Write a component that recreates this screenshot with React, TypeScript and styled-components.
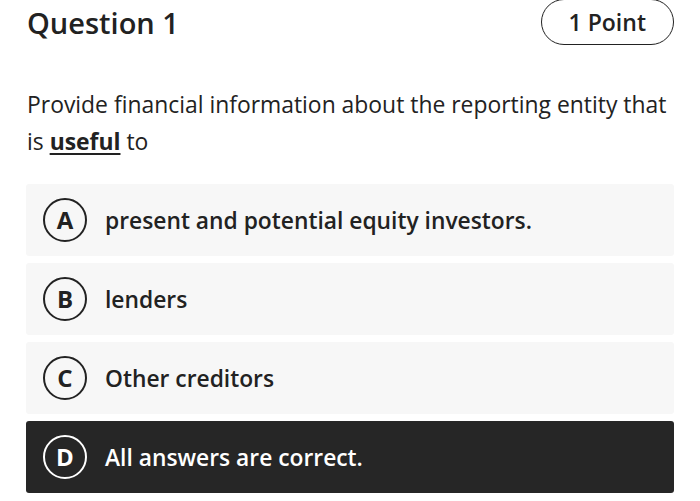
import React from "react";
import styled, { createGlobalStyle } from "styled-components";

const GlobalStyle = createGlobalStyle`
  html, body {
    margin: 0;
    padding: 0;
    background: #ffffff;
  }
  body {
    font-family: "Open Sans", "Noto Sans", sans-serif;
    color: #222222;
  }
`;

// #region Layout
const Page = styled.div`
  width: 700px;
  height: 501px;
  box-sizing: border-box;
  padding: 0 26px 0 26px;
  display: flex;
  flex-direction: column;
  overflow: hidden;
`;
const Header = styled.div`
  display: flex;
  align-items: center;
  justify-content: space-between;
  height: 45px;
`;
const Title = styled.h1`
  margin: 0 0 0 1px;
  font-size: 29px;
  font-weight: 600;
  color: #222222;
`;
const PointPill = styled.div`
  height: 46px;
  box-sizing: border-box;
  padding: 0 27px;
  display: flex;
  align-items: center;
  border: 1.5px solid #222222;
  border-radius: 23px;
  font-size: 23px;
  font-weight: 600;
  color: #222222;
  margin-top: -2px;
`;
const QuestionText = styled.p`
  margin: 41px 0 0 1px;
  font-size: 22.9px;
  line-height: 37px;
  font-weight: 400;
  color: #222222;

  strong {
    font-weight: 700;
    text-decoration: underline;
    text-underline-offset: 3px;
    text-decoration-thickness: 2px;
  }
`;
const OptionList = styled.div`
  margin-top: 24px;
  display: flex;
  flex-direction: column;
  gap: 7px;
`;
// #endregion

// #region Option
const OptionRow = styled.div<{ $selected?: boolean }>`
  height: 72px;
  box-sizing: border-box;
  display: flex;
  align-items: center;
  gap: 18px;
  padding-left: 17px;
  border-radius: 3px;
  background: ${(p) => (p.$selected ? "#262626" : "#f7f7f7")};
  color: ${(p) => (p.$selected ? "#ffffff" : "#222222")};
`;
const LetterCircle = styled.div<{ $selected?: boolean }>`
  width: 44px;
  height: 44px;
  box-sizing: border-box;
  border-radius: 50%;
  border: 2.5px solid ${(p) => (p.$selected ? "#ffffff" : "#222222")};
  display: flex;
  align-items: center;
  justify-content: center;
  font-size: 24px;
  font-weight: 700;
  line-height: 1;
  flex-shrink: 0;
`;
const OptionLabel = styled.span`
  font-size: 22.8px;
  font-weight: 600;
`;
// #endregion

const options = [
  { key: "A", label: "present and potential equity investors." },
  { key: "B", label: "lenders" },
  { key: "C", label: "Other creditors" },
  { key: "D", label: "All answers are correct.", selected: true },
];

export default function App() {
  return (
    <>
      <GlobalStyle />
      <Page>
        <Header>
          <Title>Question 1</Title>
          <PointPill>1 Point</PointPill>
        </Header>
        <QuestionText>
          Provide financial information about the reporting entity that is{" "}
          <strong>useful</strong> to
        </QuestionText>
        <OptionList>
          {options.map((o) => (
            <OptionRow key={o.key} $selected={o.selected}>
              <LetterCircle $selected={o.selected}>{o.key}</LetterCircle>
              <OptionLabel>{o.label}</OptionLabel>
            </OptionRow>
          ))}
        </OptionList>
      </Page>
    </>
  );
}
